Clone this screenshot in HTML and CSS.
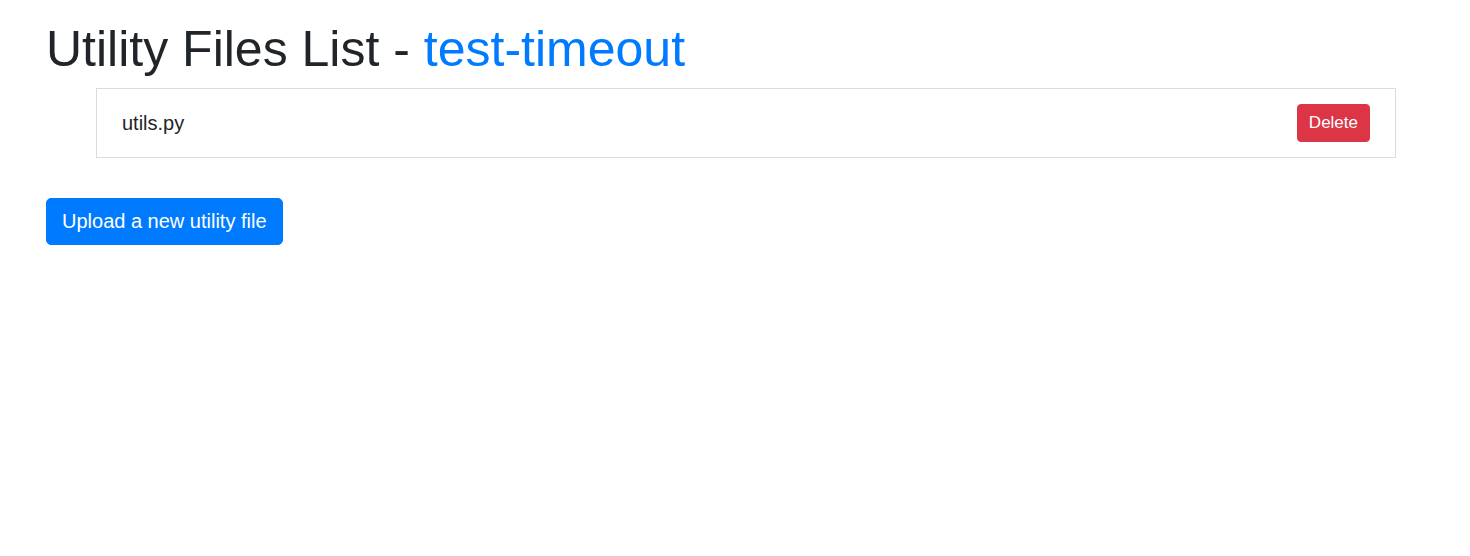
FILE: index.html
```html
<!DOCTYPE html>
<html lang="en">
<head>
<meta charset="utf-8">
<title>Utility Files List</title>
<link rel="stylesheet" href="styles.css">
</head>
<body>
<div class="container">
  <h1 class="title">Utility Files List - <a class="title-link" href="#">test-timeout</a></h1>
  <ul class="file-list">
    <li class="file-item">
      <span class="file-name">utils.py</span>
      <button class="btn btn-danger" type="button">Delete</button>
    </li>
  </ul>
  <a class="btn btn-primary btn-lg" href="#">Upload a new utility file</a>
</div>
</body>
</html>
```
FILE: styles.css
```css
html, body {
  margin: 0;
  padding: 0;
  background: #fff;
}
body {
  font-family: "Liberation Sans", Arial, sans-serif;
  color: #212529;
  font-size: 16px;
  line-height: 1.5;
}
.container {
  padding: 19px 46px 0 46px;
  display: flex;
  flex-direction: column;
  align-items: flex-start;
}
.title {
  margin: 0 0 9px 0;
  font-size: 50px;
  font-weight: 400;
  line-height: 60px;
  color: #212529;
}
.title-link {
  color: #007bff;
  text-decoration: none;
}
.file-list {
  list-style: none;
  margin: 0 0 40px 50px;
  padding: 0;
  width: 1300px;
}
.file-item {
  display: flex;
  justify-content: space-between;
  align-items: center;
  padding: 15px 25px;
  border: 1px solid #dcdcdc;
}
.file-name {
  font-size: 20px;
  line-height: 28px;
  color: #212529;
}
.btn {
  display: inline-block;
  font-family: inherit;
  font-weight: 400;
  text-align: center;
  border: 1px solid transparent;
  cursor: pointer;
  text-decoration: none;
  color: #fff;
}
.btn-danger {
  background: #dc3545;
  border-color: #dc3545;
  font-size: 17px;
  line-height: 24px;
  padding: 6px 11px;
  border-radius: 4px;
}
.btn-primary {
  background: #007bff;
  border-color: #007bff;
}
.btn-lg {
  font-size: 20px;
  line-height: 29px;
  padding: 8px 15px;
  border-radius: 5px;
}
```
